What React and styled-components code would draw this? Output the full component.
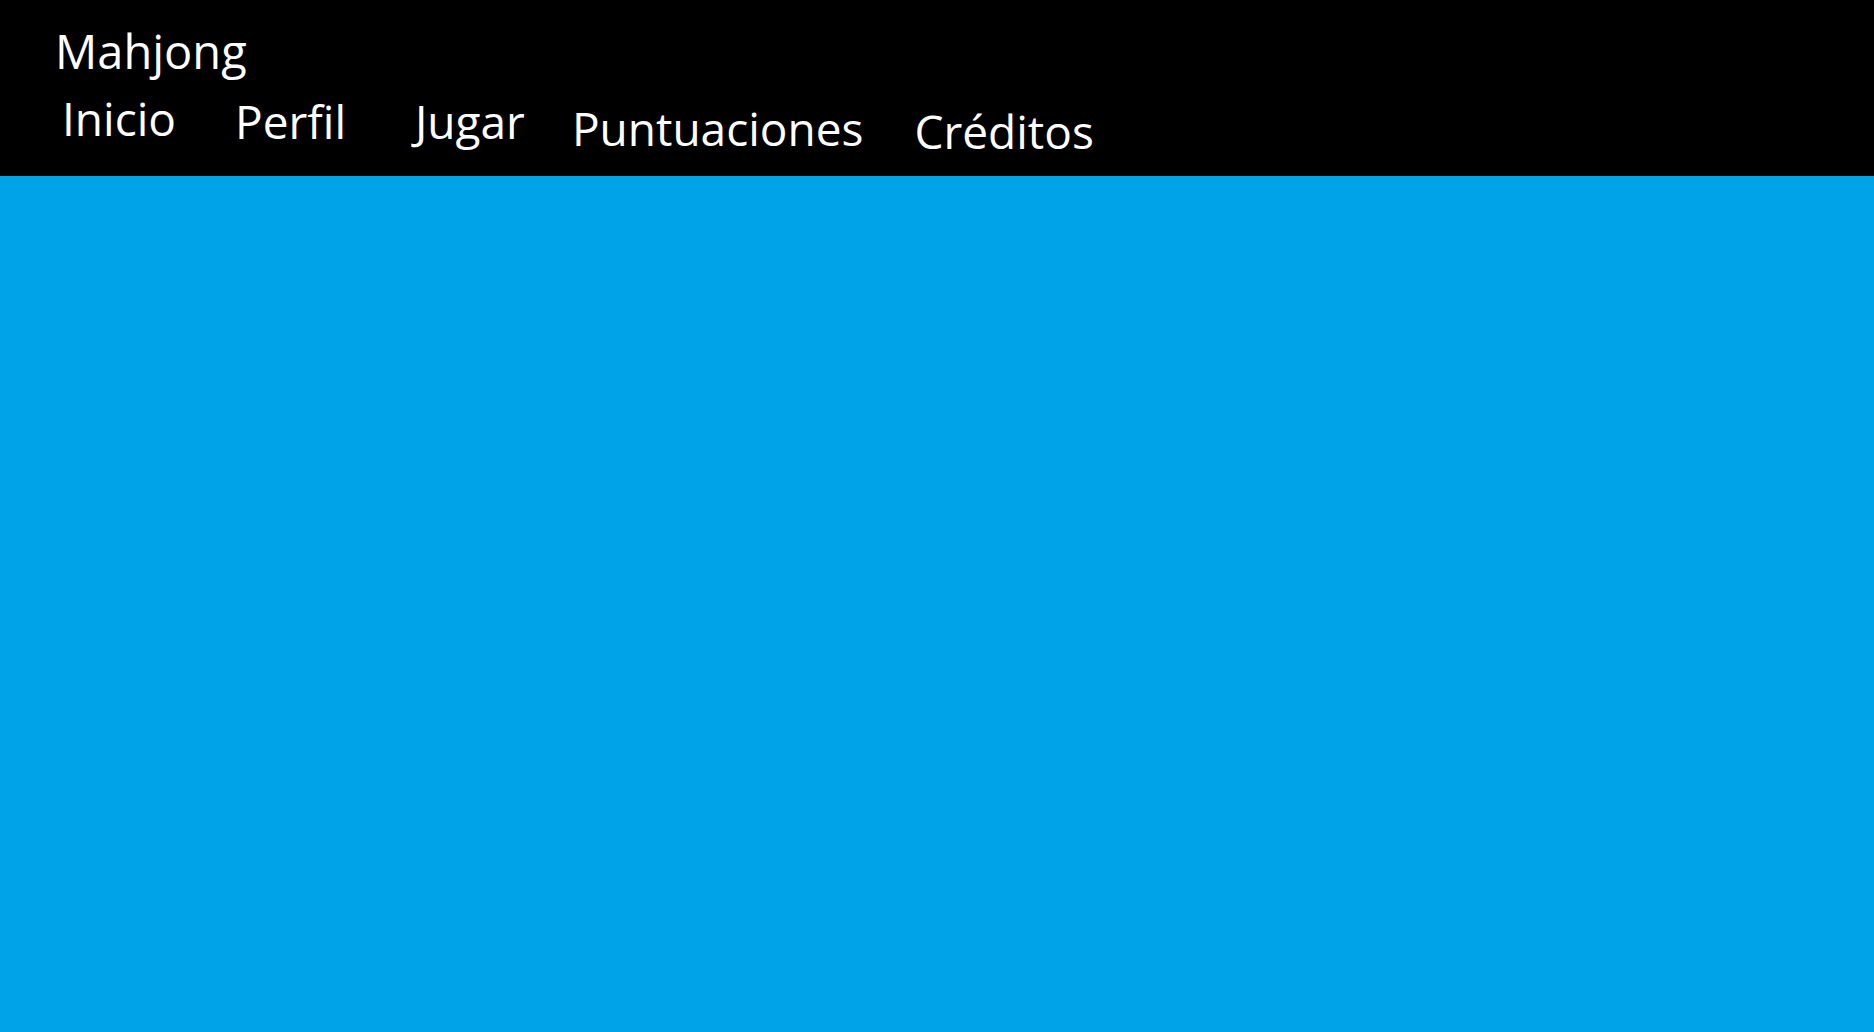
import React from 'react';
import styled, { createGlobalStyle } from 'styled-components';

const GlobalStyle = createGlobalStyle`
  html, body {
    margin: 0;
    padding: 0;
    background: #00a2e8;
  }
  body {
    font-family: "Open Sans", "Noto Sans", sans-serif;
  }
`;

const Page = styled.div`
  min-height: 100vh;
  display: flex;
  flex-direction: column;
  background: #00a2e8;
`;

const Header = styled.header`
  height: 176px;
  box-sizing: border-box;
  background: #000;
  color: #fff;
  padding: 19px 0 0 55px;
  display: flex;
  flex-direction: column;
`;

const Title = styled.div`
  font-size: 47px;
  line-height: normal;
`;

const Nav = styled.nav`
  display: flex;
  align-items: flex-start;
  margin-top: 4px;
  margin-left: 7px;
`;

const NavItem = styled.a`
  font-size: 46px;
  line-height: normal;
  color: #fff;
  text-decoration: none;
  cursor: pointer;
  margin-left: ${p => p.$left}px;
  margin-top: ${p => p.$top}px;
`;

const Main = styled.main`
  flex: 1;
`;

const links = [
  { label: 'Inicio', left: 0, top: 0 },
  { label: 'Perfil', left: 59, top: 3 },
  { label: 'Jugar', left: 69, top: 3 },
  { label: 'Puntuaciones', left: 47, top: 10 },
  { label: 'Créditos', left: 51, top: 13 },
];

export default function App() {
  return (
    <Page>
      <GlobalStyle />
      <Header>
        <Title>Mahjong</Title>
        <Nav>
          {links.map(l => (
            <NavItem key={l.label} $left={l.left} $top={l.top}>{l.label}</NavItem>
          ))}
        </Nav>
      </Header>
      <Main />
    </Page>
  );
}
